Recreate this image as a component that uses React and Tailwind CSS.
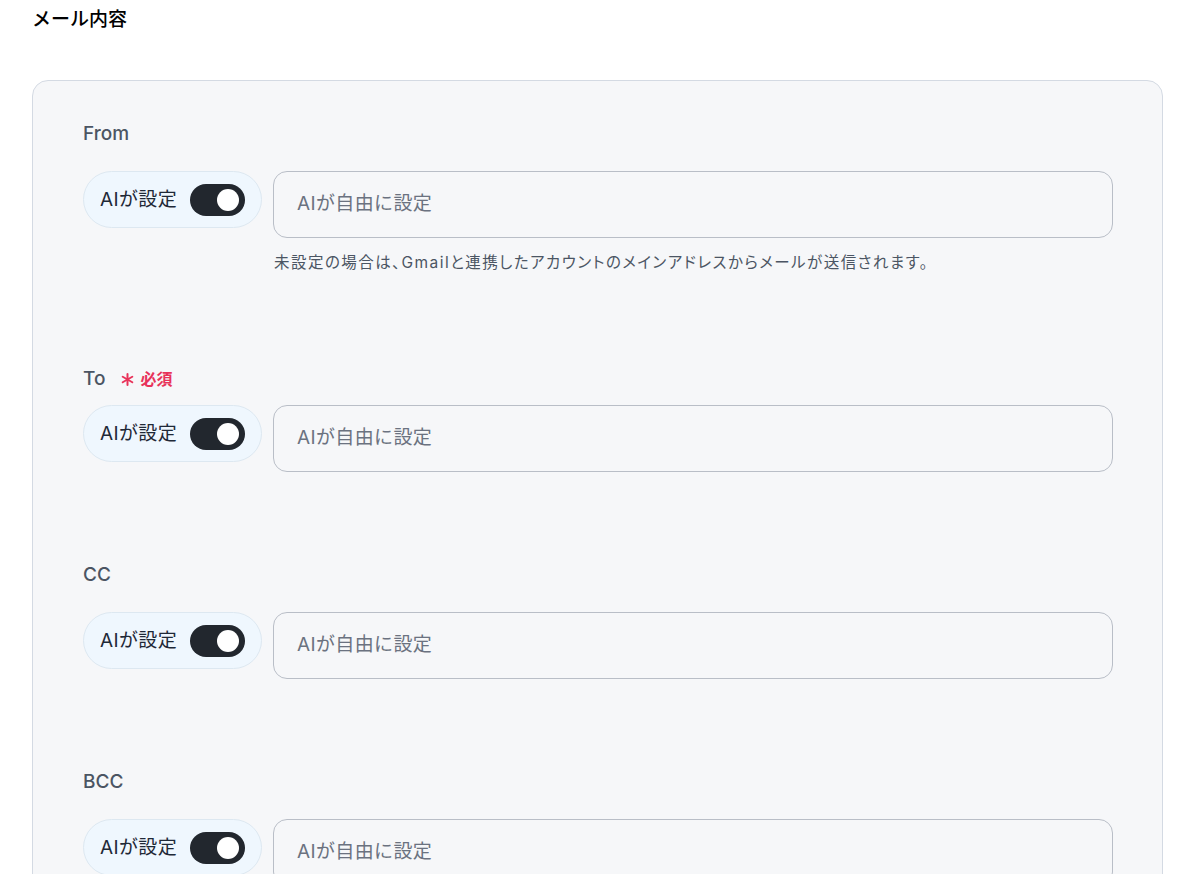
import React from "react";

const font = { fontFamily: '"Inter", "Noto Sans CJK JP", sans-serif' };

function RequiredMark() {
  return (
    <svg width="13" height="13" viewBox="0 0 13 13" className="mr-[6px]" aria-hidden="true">
      <g stroke="#e8335a" strokeWidth="2" strokeLinecap="round">
        <line x1="6.5" y1="1" x2="6.5" y2="12" />
        <line x1="1.7" y1="3.75" x2="11.3" y2="9.25" />
        <line x1="1.7" y1="9.25" x2="11.3" y2="3.75" />
      </g>
    </svg>
  );
}

function AiToggle() {
  return (
    <div className="flex h-[57px] w-[179px] shrink-0 items-center rounded-full border border-[#dde8f1] bg-[#eff7fe] pl-[16px]">
      <span className="text-[19px] leading-none tracking-[0.02em] text-[#1f2937]">AIが設定</span>
      <span className="ml-auto mr-[16px] flex h-[32px] w-[55px] items-center justify-end rounded-full bg-[#22272e] pr-[6px]">
        <span className="h-[22px] w-[22px] rounded-full bg-white" />
      </span>
    </div>
  );
}

function Field({ label, required, help }) {
  return (
    <div className="flex flex-col">
      <div className={`flex h-[24px] items-center ${required ? "mb-[14px]" : "mb-[25px]"}`}>
        <span className="text-[19px] font-medium text-[#4b5563]">{label}</span>
        {required && (
          <span className="ml-[16px] flex items-center text-[16px] font-bold text-[#e8335a]">
            <RequiredMark />
            必須
          </span>
        )}
      </div>
      <div className="flex items-start gap-[11px]">
        <AiToggle />
        <div className="flex flex-1 flex-col">
          <div className="flex h-[67px] items-center rounded-[14px] border border-[#b9bec7] px-[23px]">
            <span className="text-[19px] tracking-[0.02em] text-[#6b7280]">AIが自由に設定</span>
          </div>
          {help && (
            <p className="mt-[15px] mb-[3px] pl-[1px] text-[15.5px] leading-[20px] tracking-[0.095em] text-[#4b5563] [font-feature-settings:'palt']">
              {help}
            </p>
          )}
        </div>
      </div>
    </div>
  );
}

export default function App() {
  return (
    <div className="min-h-[874px] overflow-hidden bg-white" style={font}>
      <div className="pl-[32px] pr-[23px] pt-[8px]">
        <h2 className="h-[24px] text-[19px] font-medium leading-[24px] text-black">メール内容</h2>
        <div className="mt-[48px] flex flex-col gap-[91px] rounded-[16px] border border-[#d4dae3] bg-[#f6f7f9] pl-[50px] pr-[49px] pt-[41px] pb-[60px]">
          <Field
            label="From"
            help="未設定の場合は、Gmailと連携したアカウントのメインアドレスからメールが送信されます。"
          />
          <Field label="To" required />
          <Field label="CC" />
          <Field label="BCC" />
        </div>
      </div>
    </div>
  );
}
